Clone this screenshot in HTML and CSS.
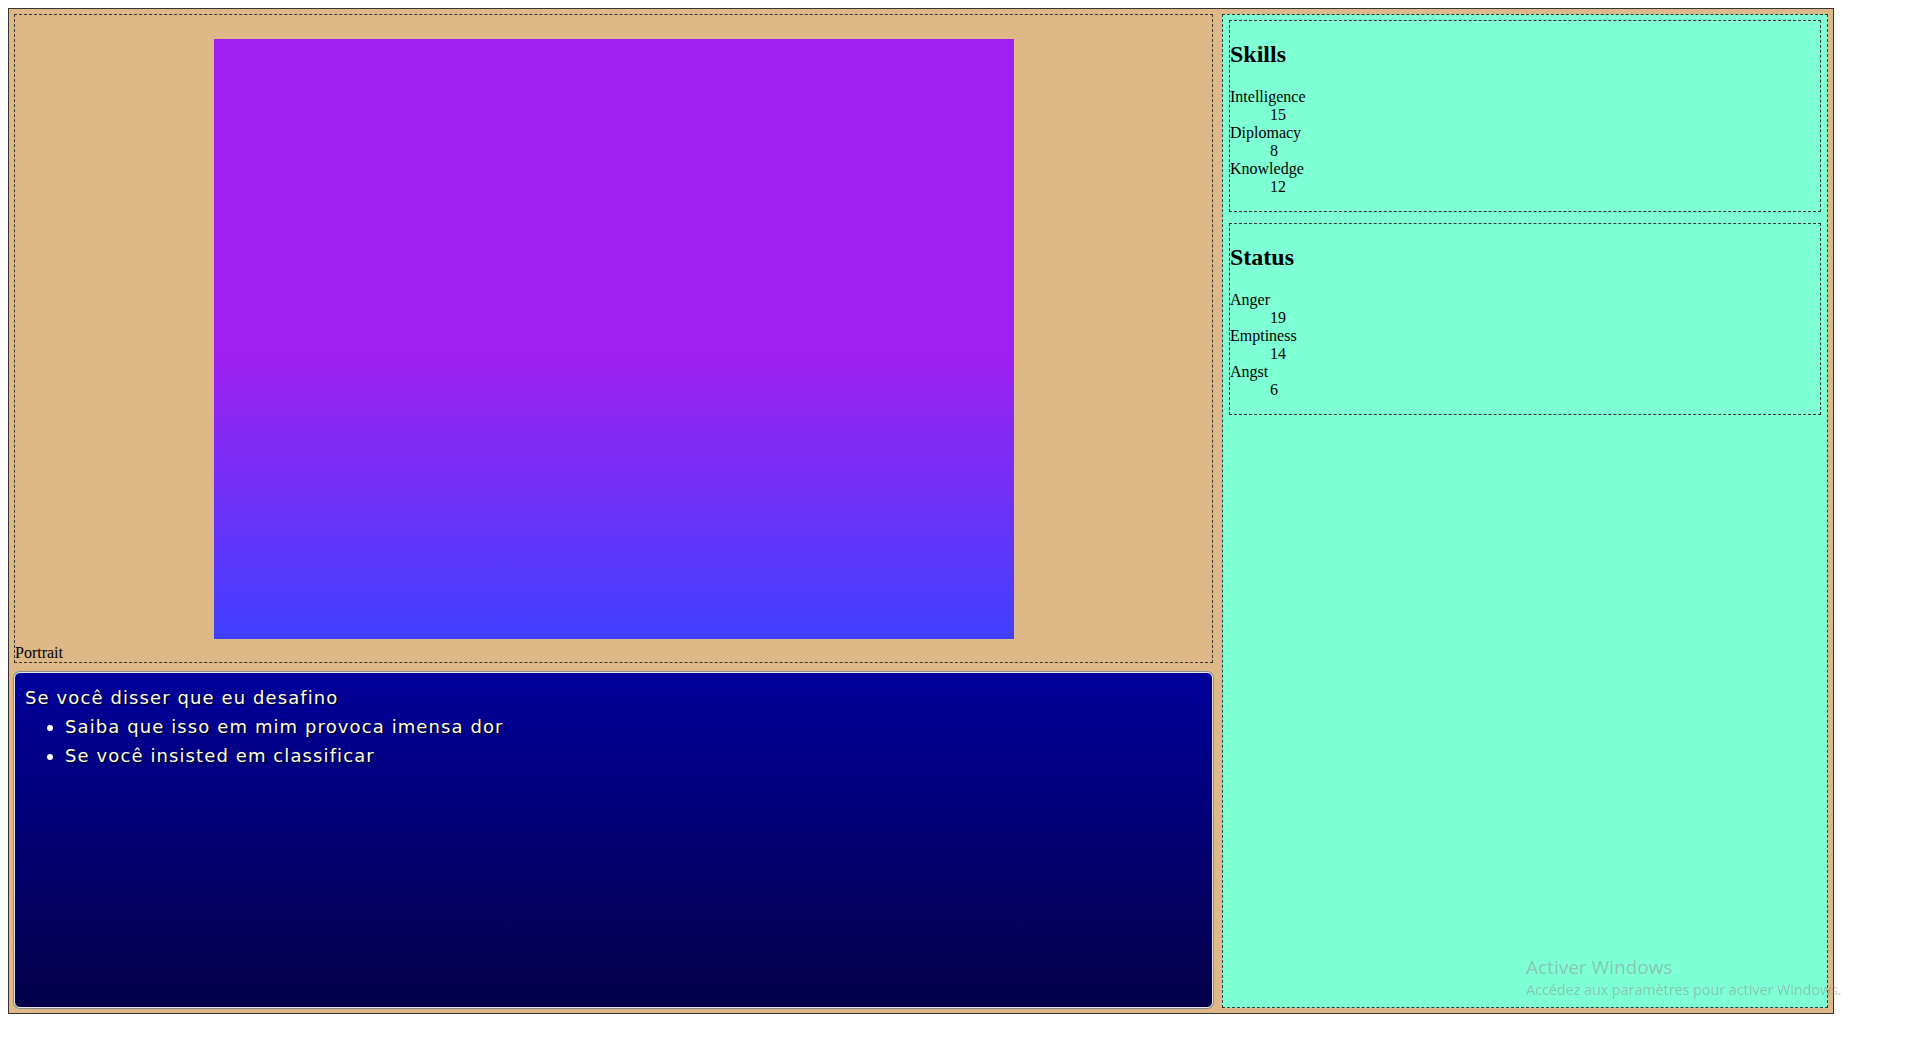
FILE: index.html
```html
<!DOCTYPE html>
<html lang="pt">
<head>
<meta charset="utf-8">
<title>Character</title>
<link rel="stylesheet" href="styles.css">
</head>
<body>
<div class="frame">
  <div class="left-col">
    <figure class="portrait">
      <div class="portrait-img"></div>
      <figcaption class="caption">Portrait</figcaption>
    </figure>
    <div class="dialog">
      <p class="dialog-line">Se você disser que eu desafino</p>
      <ul class="dialog-list">
        <li>Saiba que isso em mim provoca imensa dor</li>
        <li>Se você insisted em classificar</li>
      </ul>
    </div>
  </div>
  <aside class="side">
    <section class="stat-box">
      <h2 class="stat-title">Skills</h2>
      <dl class="stat-list">
        <dt>Intelligence</dt><dd>15</dd>
        <dt>Diplomacy</dt><dd>8</dd>
        <dt>Knowledge</dt><dd>12</dd>
      </dl>
    </section>
    <section class="stat-box">
      <h2 class="stat-title">Status</h2>
      <dl class="stat-list">
        <dt>Anger</dt><dd>19</dd>
        <dt>Emptiness</dt><dd>14</dd>
        <dt>Angst</dt><dd>6</dd>
      </dl>
    </section>
  </aside>
</div>
<div class="watermark">
  <div class="wm-title">Activer Windows</div>
  <div class="wm-sub">Accédez aux paramètres pour activer Windows.</div>
</div>
</body>
</html>
```

FILE: styles.css
```css
html, body {
  background: #ffffff;
}
body {
  margin: 8px;
  font-family: "Liberation Serif", "Times New Roman", serif;
  font-size: 16px;
  color: #000;
}
.frame {
  box-sizing: border-box;
  width: 1826px;
  height: 1006px;
  border: 1px solid #333;
  background: #deb887;
  padding: 5px;
  display: grid;
  grid-template-columns: 1199px 606px;
  column-gap: 9px;
}
.left-col {
  display: flex;
  flex-direction: column;
  gap: 9px;
  min-height: 0;
}
.portrait {
  box-sizing: border-box;
  margin: 0;
  height: 649px;
  border: 1px dashed #333;
  padding-top: 24px;
  display: flex;
  flex-direction: column;
}
.portrait-img {
  width: 800px;
  height: 600px;
  margin: 0 auto 5px;
  background: linear-gradient(to bottom, #a020f0 0%, #a020f0 52%, #4040ff 100%);
}
.caption {
  line-height: 18px;
}
.dialog {
  flex: 1;
  box-sizing: border-box;
  border: 1px solid #e8e8e8;
  box-shadow: 0 0 0 1px #8a8a8a;
  border-radius: 6px;
  background: linear-gradient(to bottom, #00009c 0%, #050048 100%);
  padding: 10px;
  color: #fffff4;
  font-family: "DejaVu Sans", Verdana, sans-serif;
  font-size: 18px;
  letter-spacing: 1.1px;
  line-height: 29px;
  text-shadow: 1px 1px 1px #000;
}
.dialog-line {
  margin: 0;
}
.dialog-list {
  margin: 0;
  padding-left: 40px;
}
.side {
  box-sizing: border-box;
  border: 1px dashed #333;
  background: #7fffd4;
  padding: 5px 6px;
  display: flex;
  flex-direction: column;
  gap: 11px;
}
.stat-box {
  border: 1px dashed #333;
}
.stat-title {
  font-size: 24px;
  line-height: 27px;
  margin: 20px 0;
}
.stat-list {
  margin: 0 0 15px;
  line-height: 18px;
}
.stat-list dd {
  margin-left: 40px;
}
.watermark {
  position: fixed;
  left: 1526px;
  top: 954px;
  color: rgba(140, 140, 140, 0.5);
  font-family: "Open Sans", "Noto Sans", sans-serif;
  pointer-events: none;
}
.wm-title {
  font-size: 19px;
  line-height: 26px;
}
.wm-sub {
  font-size: 14.3px;
  line-height: 20px;
}
```
